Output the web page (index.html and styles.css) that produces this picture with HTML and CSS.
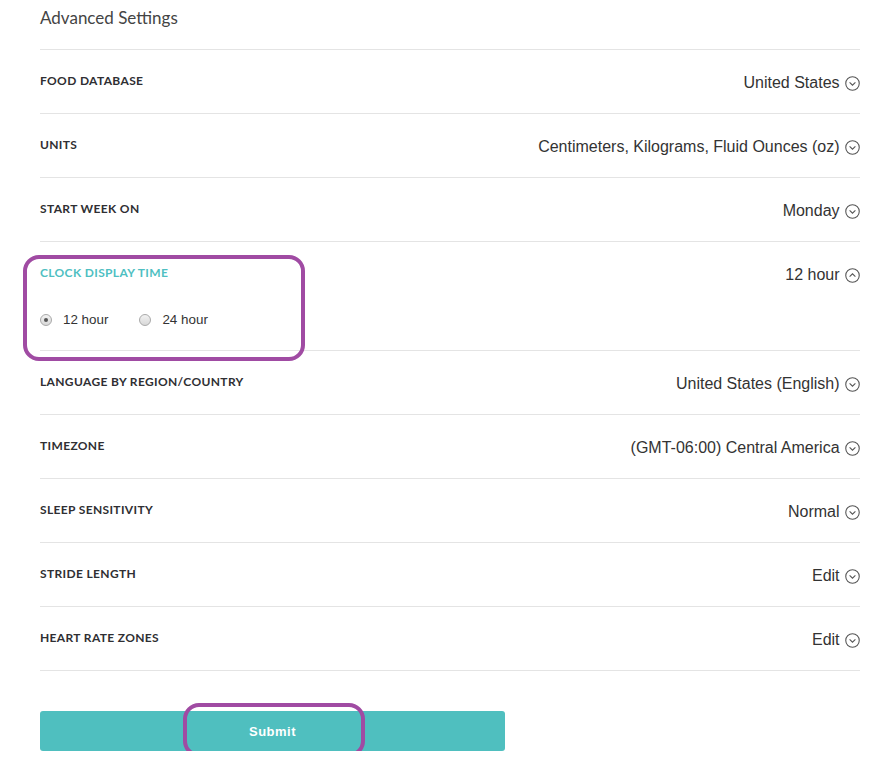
FILE: index.html
```html
<!DOCTYPE html>
<html>
<head>
<meta charset="utf-8">
<link rel="stylesheet" href="styles.css">
</head>
<body>
<div class="page">
  <h2 class="title">Advanced Settings</h2>
  <div class="row">
    <div class="label">FOOD DATABASE</div>
    <div class="value">United States <svg class="chev" viewBox="0 0 14 14"><circle cx="7" cy="7" r="6.3"/><path d="M4.3 5.9 L7 8.6 L9.7 5.9"/></svg></div>
  </div>
  <div class="row">
    <div class="label">UNITS</div>
    <div class="value">Centimeters, Kilograms, Fluid Ounces (oz) <svg class="chev" viewBox="0 0 14 14"><circle cx="7" cy="7" r="6.3"/><path d="M4.3 5.9 L7 8.6 L9.7 5.9"/></svg></div>
  </div>
  <div class="row">
    <div class="label">START WEEK ON</div>
    <div class="value">Monday <svg class="chev" viewBox="0 0 14 14"><circle cx="7" cy="7" r="6.3"/><path d="M4.3 5.9 L7 8.6 L9.7 5.9"/></svg></div>
  </div>
  <div class="row row-open">
    <div class="open-left">
      <div class="label label-active">CLOCK DISPLAY TIME</div>
      <div class="radios">
        <label class="radio"><span class="dot checked"></span>12 hour</label>
        <label class="radio"><span class="dot"></span>24 hour</label>
      </div>
    </div>
    <div class="value">12 hour <svg class="chev" viewBox="0 0 14 14"><circle cx="7" cy="7" r="6.3"/><path d="M4.3 8.1 L7 5.4 L9.7 8.1"/></svg></div>
    <div class="annot annot-clock"></div>
  </div>
  <div class="row">
    <div class="label">LANGUAGE BY REGION/COUNTRY</div>
    <div class="value">United States (English) <svg class="chev" viewBox="0 0 14 14"><circle cx="7" cy="7" r="6.3"/><path d="M4.3 5.9 L7 8.6 L9.7 5.9"/></svg></div>
  </div>
  <div class="row">
    <div class="label">TIMEZONE</div>
    <div class="value">(GMT-06:00) Central America <svg class="chev" viewBox="0 0 14 14"><circle cx="7" cy="7" r="6.3"/><path d="M4.3 5.9 L7 8.6 L9.7 5.9"/></svg></div>
  </div>
  <div class="row">
    <div class="label">SLEEP SENSITIVITY</div>
    <div class="value">Normal <svg class="chev" viewBox="0 0 14 14"><circle cx="7" cy="7" r="6.3"/><path d="M4.3 5.9 L7 8.6 L9.7 5.9"/></svg></div>
  </div>
  <div class="row">
    <div class="label">STRIDE LENGTH</div>
    <div class="value">Edit <svg class="chev" viewBox="0 0 14 14"><circle cx="7" cy="7" r="6.3"/><path d="M4.3 5.9 L7 8.6 L9.7 5.9"/></svg></div>
  </div>
  <div class="row">
    <div class="label">HEART RATE ZONES</div>
    <div class="value">Edit <svg class="chev" viewBox="0 0 14 14"><circle cx="7" cy="7" r="6.3"/><path d="M4.3 5.9 L7 8.6 L9.7 5.9"/></svg></div>
  </div>
  <div class="actions">
    <button class="submit">Submit</button>
    <div class="annot annot-submit"></div>
  </div>
</div>
</body>
</html>
```

FILE: styles.css
```css
html, body {
  margin: 0;
  padding: 0;
  background: #fff;
}
.page {
  width: 820px;
  padding-left: 40px;
  font-family: "Liberation Sans", Arial, sans-serif;
  color: #333;
}
.title {
  margin: 0;
  padding-top: 8px;
  height: 41px;
  font-family: "Lato", "Open Sans", sans-serif;
  font-weight: 400;
  font-size: 17px;
  line-height: 20px;
  color: #444;
  border-bottom: 1px solid #e4e4e4;
}
.row {
  position: relative;
  display: flex;
  justify-content: space-between;
  align-items: flex-start;
  height: 63px;
  border-bottom: 1px solid #e4e4e4;
}
.label {
  padding-top: 24px;
  font-family: "Lato", "Open Sans", sans-serif;
  font-weight: 700;
  font-size: 12px;
  line-height: 14px;
  color: #2f2f33;
  letter-spacing: 0.35px;
}
.label-active {
  color: #4fbfc2;
}
.value {
  display: flex;
  align-items: center;
  padding-top: 23px;
  font-size: 16px;
  line-height: 20px;
  color: #333;
  white-space: pre;
}
.chev {
  width: 15px;
  height: 15px;
  margin-left: 1px;
  fill: none;
  stroke: #555;
  stroke-width: 1;
}
.row-open {
  height: 108px;
}
.radios {
  display: flex;
  gap: 31px;
  margin-top: 30px;
}
.radio {
  display: flex;
  align-items: center;
  gap: 11px;
  font-size: 13.4px;
  line-height: 20px;
  color: #333;
}
.dot {
  box-sizing: border-box;
  width: 12px;
  height: 12px;
  border-radius: 50%;
  border: 1px solid #a9a9a9;
  background: linear-gradient(#f2f2f2, #d8d8d8);
  position: relative;
}
.dot.checked::after {
  content: "";
  position: absolute;
  left: 3px;
  top: 3px;
  width: 4px;
  height: 4px;
  border-radius: 50%;
  background: #555;
}
.annot {
  position: absolute;
  box-sizing: border-box;
  border: 4px solid #a04ba3;
  border-radius: 16px;
  pointer-events: none;
}
.annot-clock {
  left: -17px;
  top: 13px;
  width: 282px;
  height: 106px;
}
.actions {
  position: relative;
  padding-top: 40px;
}
.submit {
  display: block;
  width: 465px;
  height: 40px;
  border: none;
  border-radius: 3px;
  background: #4fbfbf;
  color: #fff;
  font-family: "Liberation Sans", Arial, sans-serif;
  font-weight: 700;
  font-size: 13px;
  letter-spacing: 0.5px;
}
.annot-submit {
  left: 143px;
  top: 32px;
  width: 182px;
  height: 54px;
}
```
